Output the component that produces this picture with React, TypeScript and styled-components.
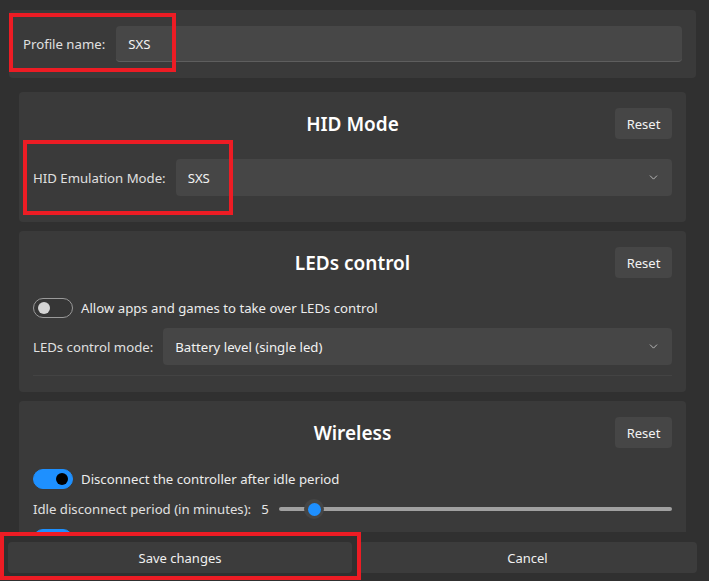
import React from "react";
import styled, { createGlobalStyle } from "styled-components";
import { ChevronDown } from "lucide-react";

const GlobalStyle = createGlobalStyle`
  html, body { margin: 0; padding: 0; background: #303030; }
  body {
    font-family: "Noto Sans", "Open Sans", sans-serif;
    font-size: 13.2px;
    color: #e6e6e6;
  }
  * { box-sizing: border-box; }
`;

const Page = styled.div`
  height: 581px;
  display: flex;
  flex-direction: column;
  overflow: hidden;
  background: #303030;
`;

const ScrollArea = styled.div`
  flex: 1;
  overflow: hidden;
  padding: 10px 13px 0 9px;
`;

const ProfileCard = styled.div`
  position: relative;
  background: #3a3a3a;
  border-radius: 4px;
  padding: 16px 14px;
  display: flex;
  align-items: center;
  gap: 11px;
`;

const Label = styled.span`
  color: #e0e0e0;
  white-space: nowrap;
`;

const TextInput = styled.div`
  flex: 1;
  height: 36px;
  background: #474747;
  border-radius: 4px;
  border-bottom: 1px solid #5e5e5e;
  display: flex;
  align-items: center;
  padding: 0 12px;
  color: #f2f2f2;
`;

const Sections = styled.div`
  margin: 14px 10px 0;
  display: flex;
  flex-direction: column;
  gap: 9px;
`;

const Card = styled.section<{ $bottom: number }>`
  position: relative;
  background: #3a3a3a;
  border-radius: 4px;
  padding: 16px 14px ${(p) => p.$bottom}px;
  display: flex;
  flex-direction: column;
  gap: 10px;
`;

const CardHeader = styled.div<{ $after?: number }>`
  display: grid;
  grid-template-columns: 1fr auto 1fr;
  align-items: center;
  height: 31px;
  margin-bottom: ${(p) => p.$after ?? 10}px;
`;

const Title = styled.h2`
  grid-column: 2;
  margin: 0;
  font-size: 19px;
  font-weight: 600;
  color: #ffffff;
`;

const ResetButton = styled.button`
  grid-column: 3;
  justify-self: end;
  width: 57px;
  height: 31px;
  border: none;
  border-radius: 4px;
  background: #464646;
  color: #f2f2f2;
  font-family: inherit;
  font-size: 13px;
  padding: 0;
`;

const Row = styled.div`
  display: flex;
  align-items: center;
  gap: 10px;
`;

const ToggleRow = styled.div`
  display: flex;
  align-items: center;
  gap: 8px;
  color: #ececec;
`;

const Select = styled.div`
  flex: 1;
  height: 37px;
  background: #464646;
  border-radius: 4px;
  display: flex;
  align-items: center;
  justify-content: space-between;
  padding: 0 12px;
  color: #f2f2f2;
`;

const Separator = styled.div`
  height: 1px;
  background: #434343;
`;

const Toggle = styled.div<{ $on: boolean }>`
  position: relative;
  width: 40px;
  height: 20px;
  flex: none;
  border-radius: 10px;
  background: ${(p) => (p.$on ? "#1e90ff" : "#363636")};
  border: 1px solid ${(p) => (p.$on ? "#1e90ff" : "#9a9a9a")};

  &::after {
    content: "";
    position: absolute;
    top: 3px;
    left: ${(p) => (p.$on ? "22px" : "4px")};
    width: 12px;
    height: 12px;
    border-radius: 50%;
    background: ${(p) => (p.$on ? "#000000" : "#d4d4d4")};
  }
`;

const SliderValue = styled.span`
  color: #e6e6e6;
  width: 8px;
`;

const SliderTrack = styled.div`
  position: relative;
  flex: 1;
  height: 20px;

  &::before {
    content: "";
    position: absolute;
    left: 0;
    right: 0;
    top: 8px;
    height: 4px;
    border-radius: 2px;
    background: #a0a0a0;
  }
`;

const SliderThumb = styled.div`
  position: absolute;
  top: 0;
  width: 20px;
  height: 20px;
  margin-left: -10px;
  border-radius: 50%;
  background: #454545;
  display: flex;
  align-items: center;
  justify-content: center;

  &::after {
    content: "";
    width: 13px;
    height: 13px;
    border-radius: 50%;
    background: #1e90ff;
  }
`;

const Footer = styled.footer`
  position: relative;
  height: 49px;
  flex: none;
  background: #303030;
  padding: 10px 12px 8px 8px;
  display: grid;
  grid-template-columns: 344px 1fr;
  gap: 6px;
`;

const FooterButton = styled.button`
  height: 31px;
  border: none;
  border-radius: 4px;
  background: #3c3c3c;
  color: #f0f0f0;
  font-family: inherit;
  font-size: 13px;
`;

const Annotation = styled.div<{ $top: number; $left: number; $w: number; $h: number }>`
  position: absolute;
  top: ${(p) => p.$top}px;
  left: ${(p) => p.$left}px;
  width: ${(p) => p.$w}px;
  height: ${(p) => p.$h}px;
  border: 4px solid #ed1c24;
  pointer-events: none;
`;

const Chevron = () => <ChevronDown size={13} strokeWidth={1.5} color="#cfcfcf" />;

const IDLE = { value: 5, min: 1, max: 60 };

export default function App() {
  const frac = (IDLE.value - IDLE.min) / (IDLE.max - IDLE.min);
  return (
    <>
      <GlobalStyle />
      <Page>
        <ScrollArea>
          <ProfileCard>
            <Label>Profile name:</Label>
            <TextInput>SXS</TextInput>
            <Annotation $top={3} $left={0} $w={167} $h={59} />
          </ProfileCard>

          <Sections>
            <Card $bottom={26}>
              <CardHeader>
                <Title>HID Mode</Title>
                <ResetButton>Reset</ResetButton>
              </CardHeader>
              <Row>
                <Label>HID Emulation Mode:</Label>
                <Select>
                  <span>SXS</span>
                  <Chevron />
                </Select>
              </Row>
              <Annotation $top={48} $left={4} $w={210} $h={75} />
            </Card>

            <Card $bottom={16}>
              <CardHeader>
                <Title>LEDs control</Title>
                <ResetButton>Reset</ResetButton>
              </CardHeader>
              <ToggleRow>
                <Toggle $on={false} />
                <span>Allow apps and games to take over LEDs control</span>
              </ToggleRow>
              <Row>
                <Label>LEDs control mode:</Label>
                <Select>
                  <span>Battery level (single led)</span>
                  <Chevron />
                </Select>
              </Row>
              <Separator />
            </Card>

            <Card $bottom={16}>
              <CardHeader $after={11}>
                <Title>Wireless</Title>
                <ResetButton>Reset</ResetButton>
              </CardHeader>
              <ToggleRow>
                <Toggle $on={true} />
                <span>Disconnect the controller after idle period</span>
              </ToggleRow>
              <Row>
                <Label>Idle disconnect period (in minutes):</Label>
                <SliderValue>{IDLE.value}</SliderValue>
                <SliderTrack>
                  <SliderThumb style={{ left: `calc(10px + (100% - 20px) * ${frac})` }} />
                </SliderTrack>
              </Row>
              <Row>
                <Toggle $on={true} />
              </Row>
            </Card>
          </Sections>
        </ScrollArea>

        <Footer>
          <FooterButton>Save changes</FooterButton>
          <FooterButton>Cancel</FooterButton>
          <Annotation $top={0} $left={0} $w={361} $h={48} />
        </Footer>
      </Page>
    </>
  );
}
